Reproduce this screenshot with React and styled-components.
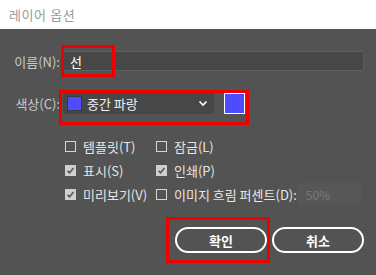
import React from "react"
import styled, { createGlobalStyle } from "styled-components"

const Global = createGlobalStyle`
  html, body {
    margin: 0;
    padding: 0;
    background: #535353;
  }
  * {
    box-sizing: border-box;
  }
`

const Dialog = styled.div`
  position: relative;
  width: 376px;
  height: 275px;
  display: flex;
  flex-direction: column;
  font-family: "Noto Sans CJK KR", "Noto Sans", sans-serif;
  background: #535353;
  overflow: hidden;
`

const TitleBar = styled.div`
  height: 29px;
  background: #ffffff;
  display: flex;
  align-items: center;
  padding-left: 9px;
  font-size: 13px;
  color: #9a9a9a;
  letter-spacing: 0.6px;
`

const Body = styled.div`
  flex: 1;
  display: flex;
  flex-direction: column;
  padding: 22px 12px 0 0;
`

const Row = styled.div`
  display: flex;
  align-items: center;
  margin-top: ${(p) => p.$mt || 0}px;
`

const Label = styled.label`
  width: 61px;
  text-align: right;
  font-size: 13px;
  color: #c8c8c8;
  padding-right: 1px;
  white-space: nowrap;
`

const TextInput = styled.div`
  margin-left: 2px;
  width: 301px;
  height: 20px;
  background: #474747;
  border: 1px solid #5e5e5e;
  border-radius: 2px;
  color: #ffffff;
  font-size: 13px;
  display: flex;
  align-items: center;
  padding-left: 6px;
`

const Select = styled.div`
  margin-left: 2px;
  width: 151px;
  height: 21px;
  background: #474747;
  border-radius: 3px;
  display: flex;
  align-items: center;
  padding: 0 6px 0 4px;
  color: #f0f0f0;
  font-size: 13px;
`

const Chip = styled.span`
  width: 15px;
  height: 15px;
  background: #4f4cff;
  border: 1px solid #3a3a3a;
  margin-right: 5px;
`

const Chevron = styled.svg`
  margin-left: auto;
`

const Swatch = styled.div`
  margin-left: 10px;
  width: 21px;
  height: 21px;
  background: #4f4cff;
  border: 1px solid #ffffff;
`

const Options = styled.div`
  margin: 21px 0 0 65px;
  display: grid;
  grid-template-columns: 91px auto;
  grid-auto-rows: 22px;
  row-gap: 2px;
`

const Option = styled.div`
  display: flex;
  align-items: center;
  font-size: 13px;
  color: #e6e6e6;
  white-space: nowrap;
`

const Box = styled.span`
  flex: none;
  width: 11px;
  height: 11px;
  border: 1px solid ${(p) => (p.$on ? "#cfcfcf" : "#d6d6d6")};
  background: ${(p) => (p.$on ? "#cfcfcf" : "transparent")};
  margin-right: 7px;
  display: flex;
  align-items: center;
  justify-content: center;
`

const SmallInput = styled.div`
  margin-left: 1px;
  width: 63px;
  height: 22px;
  background: #575757;
  color: #7a7a7a;
  font-size: 12px;
  display: flex;
  align-items: center;
  padding-left: 8px;
`

const Buttons = styled.div`
  margin-top: 22px;
  display: flex;
  justify-content: flex-end;
  gap: 5px;
`

const Button = styled.button`
  width: 92px;
  height: 26px;
  border: 2px solid #ffffff;
  border-radius: 13px;
  background: transparent;
  color: #ffffff;
  font-family: inherit;
  font-size: 13px;
  font-weight: bold;
  padding: 0;
`

const Mark = styled.div`
  position: absolute;
  left: ${(p) => p.$x}px;
  top: ${(p) => p.$y}px;
  width: ${(p) => p.$w}px;
  height: ${(p) => p.$h}px;
  border: 3px solid #ee0000;
  pointer-events: none;
`

const Check = ({ on, children }) => (
  <Option>
    <Box $on={on}>
      {on && (
        <svg width="9" height="9" viewBox="0 0 9 9">
          <path d="M1.5 4.8 L3.6 6.8 L7.5 2" fill="none" stroke="#5a5a5a" strokeWidth="1.6" />
        </svg>
      )}
    </Box>
    {children}
  </Option>
)

export default function App() {
  return (
    <Dialog>
      <Global />
      <TitleBar>레이어 옵션</TitleBar>
      <Body>
        <Row>
          <Label>이름(N):</Label>
          <TextInput>선</TextInput>
        </Row>
        <Row $mt={22}>
          <Label>색상(C):</Label>
          <Select>
            <Chip />
            중간 파랑
            <Chevron width="10" height="7" viewBox="0 0 10 7">
              <path d="M1.5 1.5 L5 5 L8.5 1.5" fill="none" stroke="#ffffff" strokeWidth="1.6" />
            </Chevron>
          </Select>
          <Swatch />
        </Row>
        <Options>
          <Check>템플릿(T)</Check>
          <Check>잠금(L)</Check>
          <Check on>표시(S)</Check>
          <Check on>인쇄(P)</Check>
          <Check on>미리보기(V)</Check>
          <Option>
            <Box />
            이미지 흐림 퍼센트(D):
            <SmallInput>50%</SmallInput>
          </Option>
        </Options>
        <Buttons>
          <Button>확인</Button>
          <Button>취소</Button>
        </Buttons>
      </Body>
      <Mark $x={61} $y={45} $w={54} $h={32} />
      <Mark $x={59} $y={90} $w={190} $h={35} />
      <Mark $x={166} $y={217} $w={104} $h={46} />
    </Dialog>
  )
}
